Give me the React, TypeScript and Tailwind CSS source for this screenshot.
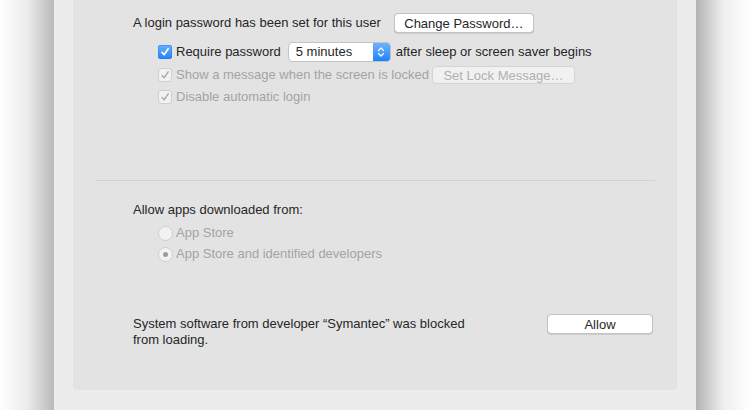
const font = { fontFamily: '"Liberation Sans", Arial, sans-serif' };

function Checkbox({ checked, disabled }: { checked?: boolean; disabled?: boolean }) {
  if (!disabled) {
    return (
      <span className="flex h-[14px] w-[14px] shrink-0 items-center justify-center rounded-[3px] bg-gradient-to-b from-[#69b1fa] to-[#1a82fb] shadow-[inset_0_0_0_0.5px_#2a7ae0]">
        {checked && (
          <svg width="10" height="10" viewBox="0 0 10 10" fill="none">
            <path d="M2 5.4 L4.1 7.8 L8.2 1.8" stroke="white" strokeWidth="1.6" strokeLinecap="round" strokeLinejoin="round" />
          </svg>
        )}
      </span>
    );
  }
  return (
    <span className="flex h-[14px] w-[14px] shrink-0 items-center justify-center rounded-[3px] border border-[#cfcfcf] bg-[#f2f2f2]">
      {checked && (
        <svg width="10" height="10" viewBox="0 0 10 10" fill="none">
          <path d="M2 5.4 L4.1 7.8 L8.2 1.8" stroke="#a9a9a9" strokeWidth="1.4" strokeLinecap="round" strokeLinejoin="round" />
        </svg>
      )}
    </span>
  );
}

function Radio({ selected }: { selected?: boolean }) {
  return (
    <span className="flex h-[15px] w-[15px] shrink-0 items-center justify-center rounded-full border border-[#cfcfcf] bg-[#f2f2f2]">
      {selected && <span className="h-[5px] w-[5px] rounded-full bg-[#9c9c9c]" />}
    </span>
  );
}

export default function App() {
  return (
    <div className="flex h-[410px] w-[750px] overflow-hidden bg-white text-[13px] text-[#262626]" style={font}>
      <div className="w-[54px] shrink-0 bg-gradient-to-r from-white via-[#ececec] to-[#b9b9b9]" />
      <div className="w-[642px] shrink-0 bg-[#ececec] px-[19px]">
        <div className="flex h-[390px] flex-col rounded-b-[4px] bg-[#e3e3e3]">
          <div className="mt-[13px] flex h-[20px] items-center pl-[60px]">
            <span>A login password has been set for this user</span>
            <button className="ml-[13px] h-[20px] w-[140px] rounded-[4px] border border-[#c3c3c3] bg-white leading-none text-[#262626] shadow-[0_0.5px_0_#b5b5b5]">
              Change Password…
            </button>
          </div>

          <div className="mt-[9px] flex h-[20px] items-center pl-[85px]">
            <Checkbox checked />
            <span className="ml-[4px]">Require password</span>
            <div className="ml-[7px] flex h-[20px] w-[103px] items-stretch overflow-hidden rounded-[4px] border border-[#c3c3c3] bg-white">
              <span className="flex flex-1 items-center pl-[7px]">5 minutes</span>
              <span className="flex w-[17px] flex-col items-center justify-center bg-gradient-to-b from-[#6cb3fa] to-[#1b82fb]">
                <svg width="8" height="12" viewBox="0 0 8 12" fill="none">
                  <path d="M1.5 4.5 L4 2 L6.5 4.5" stroke="white" strokeWidth="1.3" strokeLinecap="round" strokeLinejoin="round" />
                  <path d="M1.5 7.5 L4 10 L6.5 7.5" stroke="white" strokeWidth="1.3" strokeLinecap="round" strokeLinejoin="round" />
                </svg>
              </span>
            </div>
            <span className="ml-[5px]">after sleep or screen saver begins</span>
          </div>

          <div className="mt-[3px] flex h-[20px] items-center pl-[85px] text-[#a3a3a3]">
            <Checkbox checked disabled />
            <span className="ml-[4px]">Show a message when the screen is locked</span>
            <button className="ml-[3px] h-[18px] w-[143px] rounded-[4px] border border-[#d4d4d4] bg-[#f1f1f1] leading-none text-[#b0b0b0]">
              Set Lock Message…
            </button>
          </div>

          <div className="mt-[2px] flex h-[20px] items-center pl-[85px] text-[#a3a3a3]">
            <Checkbox checked disabled />
            <span className="ml-[4px]">Disable automatic login</span>
          </div>

          <div className="mx-[22px] mt-[73px] h-px bg-[#d1d1d1]" />

          <div className="mt-[20px] flex h-[18px] items-center pl-[60px]">Allow apps downloaded from:</div>

          <div className="mt-[4px] flex h-[20px] items-center pl-[85px] text-[#a3a3a3]">
            <Radio />
            <span className="ml-[3px]">App Store</span>
          </div>
          <div className="mt-[1px] flex h-[20px] items-center pl-[85px] text-[#a3a3a3]">
            <Radio selected />
            <span className="ml-[3px]">App Store and identified developers</span>
          </div>

          <div className="mt-[50px] flex items-start justify-between pl-[60px] pr-[24px]">
            <p className="mt-[2px] w-[345px] leading-[16px]">
              System software from developer “Symantec” was blocked from loading.
            </p>
            <button className="h-[20px] w-[106px] rounded-[4px] border border-[#c3c3c3] bg-white leading-none text-[#262626] shadow-[0_0.5px_0_#b5b5b5]">
              Allow
            </button>
          </div>
        </div>
      </div>
      <div className="w-[54px] shrink-0 bg-gradient-to-r from-[#b3b3b3] via-[#eeeeee] to-white" />
    </div>
  );
}
